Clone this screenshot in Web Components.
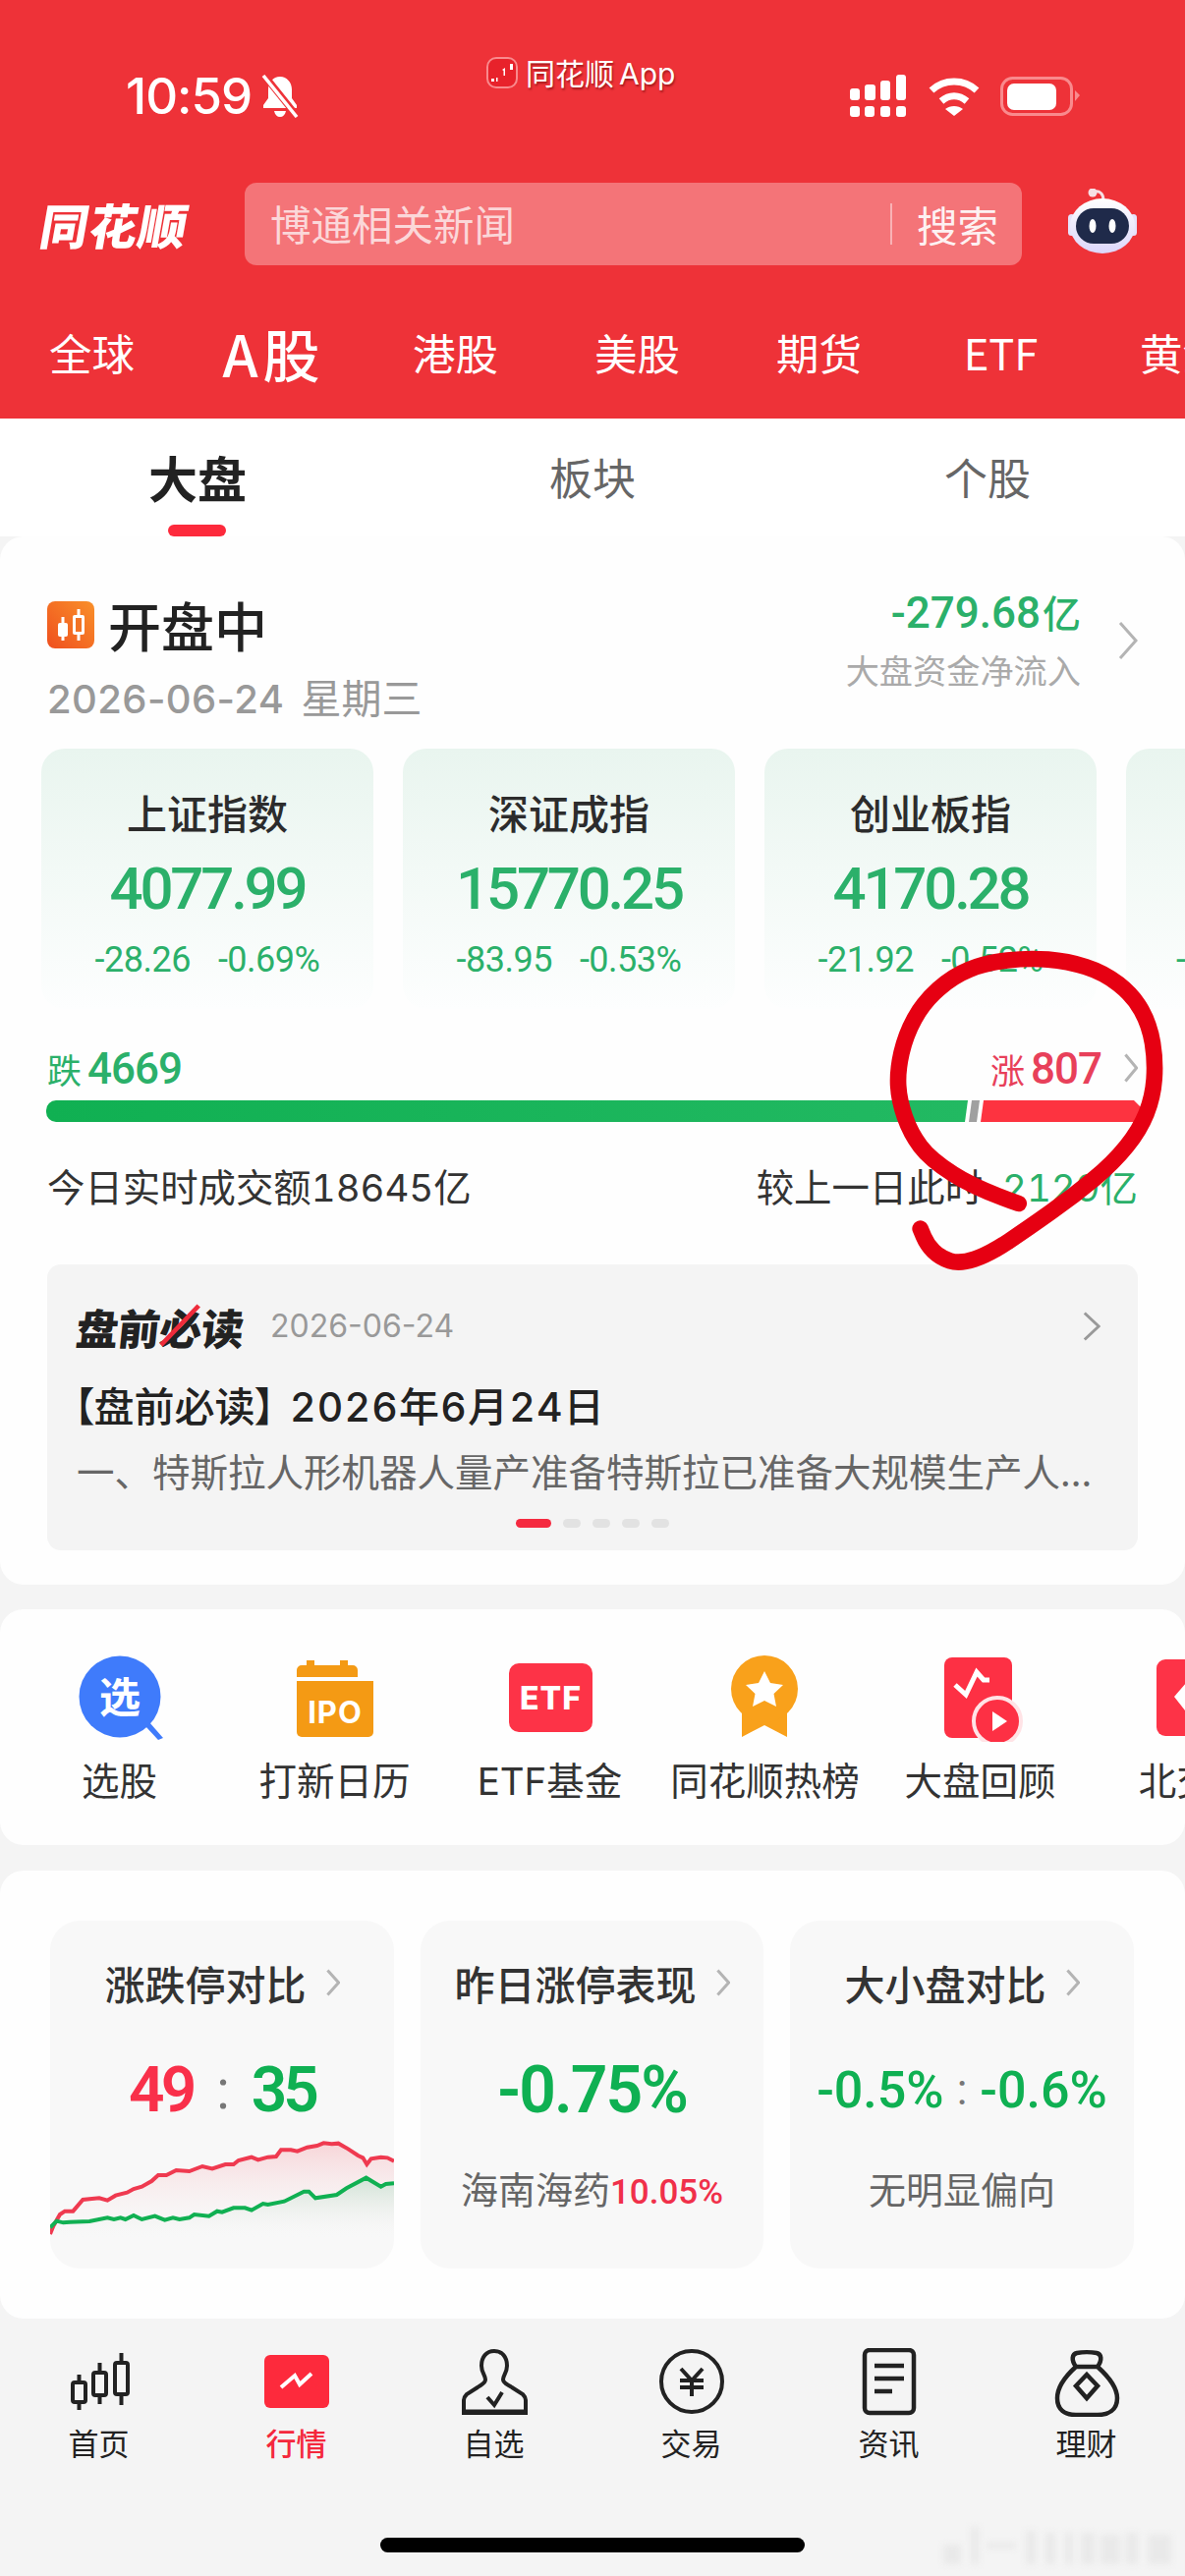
<!DOCTYPE html>
<html lang="zh">
<head>
<meta charset="utf-8">
<title>同花顺 行情</title>
<style>
  html, body { margin: 0; padding: 0; }
  body {
    position: relative;
    width: 1206px; height: 2622px; overflow: hidden;
    background: #f4f4f4;
    color: #222;
    font-family: "Noto Sans CJK SC", sans-serif;
  }
  .num { font-family: Roboto, "Noto Sans CJK SC", sans-serif; }
</style>
</head>
<body>

<app-header>
  <status-bar></status-bar>
  <search-row placeholder="博通相关新闻"></search-row>
  <market-tabs>
    <span>全球</span><b>A股</b><span>港股</span><span>美股</span><span>期货</span><span>ETF</span><span>黄金</span>
  </market-tabs>
</app-header>

<sub-tabs></sub-tabs>

<market-card>
  <index-tile>
    <span slot="title">上证指数</span><span slot="value">4077.99</span>
    <span slot="change">-28.26</span><span slot="change">-0.69%</span>
  </index-tile>
  <index-tile>
    <span slot="title">深证成指</span><span slot="value">15770.25</span>
    <span slot="change">-83.95</span><span slot="change">-0.53%</span>
  </index-tile>
  <index-tile>
    <span slot="title">创业板指</span><span slot="value">4170.28</span>
    <span slot="change">-21.92</span><span slot="change">-0.52%</span>
  </index-tile>
  <index-tile>
    <span slot="change" style="display:block;box-sizing:border-box;width:338px;padding-left:51px">-</span>
  </index-tile>
  <news-box slot="news"></news-box>
</market-card>

<shortcut-row>
  <shortcut-item label="选股">
    <svg viewBox="0 0 100 90" width="100" height="90">
      <path d="M80 70l14 16-5 2-13-14z" fill="#3f7bfb"/>
      <circle cx="50" cy="44" r="41.5" fill="#3f7bfb"/>
      <text x="50" y="60" text-anchor="middle" font-size="42" font-weight="700" fill="#fff" font-family="Noto Sans CJK SC">选</text>
    </svg>
  </shortcut-item>
  <shortcut-item label="打新日历">
    <svg viewBox="0 0 100 90" width="100" height="90">
      <path d="M11 24v-7a5 5 0 0 1 5-5h5V7h8v5h26V7h8v5h5a5 5 0 0 1 5 5v7z" fill="#f49a14"/>
      <path d="M11 28h78v52a5 5 0 0 1-5 5H16a5 5 0 0 1-5-5z" fill="#f49a14"/>
      <text x="50" y="71" text-anchor="middle" font-size="31" font-weight="700" fill="#fff" font-family="Inter" letter-spacing="1">IPO</text>
    </svg>
  </shortcut-item>
  <shortcut-item label="ETF基金">
    <svg viewBox="0 0 100 90" width="100" height="90">
      <rect x="8" y="10" width="85" height="70" rx="10" fill="#fd3347"/>
      <text x="50.500" y="57" text-anchor="middle" font-size="32" font-weight="800" fill="#fff" font-family="Inter" letter-spacing="1">ETF</text>
    </svg>
  </shortcut-item>
  <shortcut-item label="同花顺热榜">
    <svg viewBox="0 0 100 90" width="100" height="90">
      <path d="M26 50h46v35L49 73 26 85z" fill="#f9a11b"/>
      <ellipse cx="49" cy="36" rx="34" ry="34" fill="#f9a11b"/>
      <path d="M49 18l6 12 13 2-9.500 9 2.500 13-12-6-12 6 2.500-13-9.500-9 13-2z" fill="#fff"/>
    </svg>
  </shortcut-item>
  <shortcut-item label="大盘回顾">
    <svg viewBox="0 0 100 90" width="100" height="90">
      <rect x="13" y="4" width="69" height="82" rx="8" fill="#fd3044"/>
      <path d="M24 32l11 10 11-23 7 8h6" fill="none" stroke="#fff" stroke-width="5"/>
      <circle cx="67" cy="69" r="24" fill="#fd3044" stroke="#ffe3e6" stroke-width="4"/>
      <path d="M62 59l15 10-15 10z" fill="#fff"/>
    </svg>
  </shortcut-item>
  <shortcut-item label="北交所">
    <svg viewBox="0 0 100 90" width="100" height="90">
      <rect x="10" y="6" width="84" height="78" rx="9" fill="#fd3347"/>
      <path d="M28 44L40 30h25l10 14-25 28z" fill="#fff"/>
    </svg>
  </shortcut-item>
</shortcut-row>

<stats-card>
  <stat-tile title="涨跌停对比" chart>
    <span slot="value" class="num" style="font-size:64px;font-weight:600;letter-spacing:-4px;color:#f9304a">49</span>
    <span slot="value" class="num" style="font-size:56px;color:#777;margin:0 22px 0 24px">:</span>
    <span slot="value" class="num" style="font-size:64px;font-weight:600;letter-spacing:-4px;color:#0fb052">35</span>
    <trend-chart slot="chart"></trend-chart>
  </stat-tile>
  <stat-tile title="昨日涨停表现">
    <span slot="value" class="num" style="font-size:66px;font-weight:600;letter-spacing:-2px;color:#0fb052">-0.75%</span>
    <span slot="sub">海南海药<span class="num" style="font-size:35px;font-weight:500;color:#f0304a">10.05%</span></span>
  </stat-tile>
  <stat-tile title="大小盘对比">
    <span slot="value" class="num" style="font-size:52px;font-weight:500;color:#0fb052">-0.5%</span>
    <span slot="value" class="num" style="font-size:44px;color:#777;margin:0 13px">:</span>
    <span slot="value" class="num" style="font-size:52px;font-weight:500;color:#0fb052">-0.6%</span>
    <span slot="sub">无明显偏向</span>
  </stat-tile>
</stats-card>

<bottom-nav>
  <nav-item label="首页">
    <svg viewBox="0 0 70 70" width="70" height="70" fill="none" stroke="#222" stroke-width="4">
      <rect x="8" y="35" width="13" height="20" rx="2"/><path d="M14.500 27v8M14.500 55v8"/>
      <rect x="29" y="25" width="13" height="23" rx="2"/><path d="M35.500 15v10M35.500 48v9"/>
      <rect x="51" y="15" width="13" height="32" rx="2"/><path d="M57.500 5v10M57.500 47v11"/>
    </svg>
  </nav-item>
  <nav-item label="行情" active>
    <svg viewBox="0 0 70 70" width="70" height="70">
      <rect x="2" y="7" width="66" height="54" rx="6" fill="#fd2a3c"/>
      <path d="M19 40l14-12 5 9 12-11" fill="none" stroke="#fff" stroke-width="4"/>
    </svg>
  </nav-item>
  <nav-item label="自选">
    <svg viewBox="0 0 72 70" width="72" height="70" fill="none" stroke="#222" stroke-width="4">
      <path d="M36 3C44 3 49 9 49 18C49 25 45 28 45 32C45 36 50 37 54 40L65 47C67 49 68 50 68 53V66H5V53C5 50 6 49 8 47L19 40C23 37 27 36 27 32C27 28 23 25 23 18C23 9 28 3 36 3Z"/>
      <path d="M5 65h63" stroke-width="5"/>
      <path d="M29 50l7 8 8-13"/>
    </svg>
  </nav-item>
  <nav-item label="交易">
    <svg viewBox="0 0 70 70" width="70" height="70" fill="none" stroke="#222" stroke-width="4">
      <circle cx="35" cy="34" r="31"/>
      <path d="M24 21l11 12 11-12M23 33h24M23 40h24M35 33v16"/>
    </svg>
  </nav-item>
  <nav-item label="资讯">
    <svg viewBox="0 0 70 70" width="70" height="70" fill="none" stroke="#222" stroke-width="4.500">
      <rect x="10" y="2" width="50" height="64" rx="5"/>
      <path d="M20 18h30M20 31h30M20 44h18"/>
    </svg>
  </nav-item>
  <nav-item label="理财">
    <svg viewBox="0 0 70 70" width="70" height="70" fill="none" stroke="#222" stroke-width="4.500">
      <path d="M24 19C19 12 20 6 25 5c5-1 15-1 20 0 5 1 6 7 1 14"/>
      <path d="M24 19h22c10 9 20 20 20 32 0 12-9 17-20 17H24C13 68 5 63 5 51c0-12 9-23 19-32z"/>
      <path d="M35 27l11 11.500L35 51 24 38.500z"/>
    </svg>
  </nav-item>
</bottom-nav>

<ink-circle></ink-circle>

<script>
// wspolny szablon: kazdy element klonuje swoj template do open shadow root
function makeTemplate(html) {
  const t = document.createElement("template");
  t.innerHTML = html;
  return t;
}

class Base extends HTMLElement {
  constructor() {
    super();
    this.attachShadow({mode: "open"});
    this.shadowRoot.append(this.constructor.template.content.cloneNode(true));
  }
}

class AppHeader extends Base {}
AppHeader.template = makeTemplate(`
<style>
:host { display: block; height: 426px; background: #ee3238; color: #fff; overflow: hidden; }
</style>
<slot></slot>`);

class StatusBar extends Base {}
StatusBar.template = makeTemplate(`
<style>
:host { display: flex; height: 186px; box-sizing: border-box; padding: 0 0 0 128px; position: relative; }
.time { margin-top: 68px; height: 60px; font: 500 51px/60px Inter, sans-serif; letter-spacing: -1px; }
.bell { margin: 76px 0 0 8px; }
.app { display: flex; align-items: center; gap: 8px; position: absolute; left: 495px; top: 51px;
  font: 400 30px/44px "Noto Sans CJK SC", sans-serif; text-shadow: 1px 2px 2px rgba(90,0,0,.5); }
.app svg { display: block; }
.app em { font: 400 30px/44px Inter, sans-serif; margin-left: 5px; font-style: normal; }
.right { position: absolute; left: 864px; top: 76px; display: flex; gap: 21px; }
</style>
<div class="time">10:59</div>
<svg class="bell" width="42" height="44" viewBox="0 0 42 44">
  <path d="M21 2c-7 0-12 6-12 13v9l-5 7v3h34v-3l-5-7v-9c0-7-5-13-12-13z" fill="#fff"/>
  <path d="M15 37c1 4 3 6 6 6s5-2 6-6z" fill="#fff"/>
  <path d="M6 2l32 40" stroke="#ee3238" stroke-width="7"/>
  <path d="M4 1l34 42" stroke="#fff" stroke-width="3.500"/>
</svg>
<div class="app">
  <svg width="32" height="32" viewBox="0 0 32 32">
    <rect x="1" y="1" width="30" height="30" rx="9" fill="#e8222b" stroke="#f98a8d" stroke-width="2"/>
    <path d="M5 22h3v3H5zM10 21h1.500v4H10zM16 13l3-2v8h-1.500v-5zM24 7h3v6h-3z" fill="#fff"/>
  </svg>
  <span>同花顺<em>App</em></span>
</div>
<div class="right">
  <svg width="60" height="44" viewBox="0 0 60 44" fill="#fff">
    <rect x="1" y="14" width="10" height="12" rx="3"/><rect x="16" y="10" width="11" height="16" rx="3"/>
    <rect x="32" y="6" width="10" height="20" rx="3"/><rect x="48" y="0" width="10" height="26" rx="3"/>
    <rect x="1" y="32" width="10" height="11" rx="3"/><rect x="16" y="32" width="10" height="11" rx="3"/>
    <rect x="32" y="32" width="10" height="11" rx="3"/><rect x="48" y="32" width="10" height="11" rx="3"/>
  </svg>
  <svg width="52" height="44" viewBox="0 0 52 44" fill="none" stroke="#fff" stroke-width="7">
    <path d="M3 16c13-12 33-12 46 0"/><path d="M13 27c8-7 18-7 26 0"/>
    <path d="M26 42l-9-7c5-4 13-4 18 0z" fill="#fff" stroke="none"/>
  </svg>
  <svg width="84" height="44" viewBox="0 0 84 44">
    <rect x="1.500" y="3.500" width="71" height="37" rx="11" fill="none" stroke="#f98a8d" stroke-width="3"/>
    <rect x="7" y="9" width="50" height="27" rx="7" fill="#fff"/>
    <path d="M76 16l5 5-5 6z" fill="#f98a8d"/>
  </svg>
</div>`);

class SearchRow extends Base {
  connectedCallback() {
    this.shadowRoot.querySelector(".hint").textContent = this.getAttribute("placeholder");
  }
}
SearchRow.template = makeTemplate(`
<style>
:host { display: flex; align-items: center; height: 84px; padding-left: 42px; }
.logo { width: 207px; font: 900 49px/84px "Noto Sans CJK SC", sans-serif; letter-spacing: 1px;
  transform: skewX(-10deg); transform-origin: left center; white-space: nowrap; }
.box { display: flex; align-items: center; width: 791px; height: 84px; box-sizing: border-box; padding: 0 24px 0 26px;
  background: #f47478; border-radius: 12px; font-size: 41.500px; line-height: 80px; }
.hint { flex: 1; color: rgba(255,255,255,.72); margin-top: -3px; }
.btn { padding-left: 25px; border-left: 2px solid rgba(255,255,255,.45); height: 42px; display: flex; align-items: center; color: rgba(255,255,255,.92); }
svg { margin-left: 44px; }
</style>
<div class="logo">同花顺</div>
<div class="box"><span class="hint"></span><span class="btn">搜索</span></div>
<svg width="76" height="72" viewBox="0 0 76 72">
  <defs><linearGradient id="shell" x1="0" y1="0" x2="0" y2="1"><stop offset="0" stop-color="#fff"/><stop offset="1" stop-color="#dcd6fb"/></linearGradient></defs>
  <path d="M30 3c5-1 9 2 9 9" fill="none" stroke="#f6dfe4" stroke-width="3"/>
  <circle cx="28" cy="4" r="4.500" fill="#f6dfe4"/>
  <rect x="3" y="26" width="7" height="22" rx="3.500" fill="#e6e2fb"/><rect x="66" y="26" width="7" height="22" rx="3.500" fill="#e6e2fb"/>
  <ellipse cx="38" cy="38" rx="33" ry="28" fill="url(#shell)"/>
  <rect x="11" y="20" width="54" height="36" rx="18" fill="#1f2a4a"/>
  <ellipse cx="28" cy="38" rx="3.500" ry="7" fill="#fff"/><ellipse cx="48" cy="38" rx="3.500" ry="7" fill="#fff"/>
</svg>`);

class MarketTabs extends Base {}
MarketTabs.template = makeTemplate(`
<style>
:host { display: grid; grid-auto-flow: column; grid-auto-columns: 185px; align-items: center; justify-items: center;
  margin-left: 1px; height: 156px; padding-top: 21px; box-sizing: border-box; font-size: 43.500px; white-space: nowrap; }
::slotted(b) { font-size: 58px; font-weight: 500; letter-spacing: 5px; }
::slotted(span) { font-weight: 400; }
</style>
<slot></slot>`);

class SubTabs extends Base {}
SubTabs.template = makeTemplate(`
<style>
:host { display: grid; grid-template-columns: repeat(3, 1fr); height: 120px; background: #fff; text-align: center; }
div { font-size: 44px; line-height: 119px; color: #666; }
.on { font-size: 50px; font-weight: 700; color: #222; position: relative; }
.on::after { content: ""; position: absolute; left: 171px; top: 108px; width: 59px; height: 12px; border-radius: 6px; background: #fd2a3c; }
</style>
<div class="on">大盘</div><div>板块</div><div>个股</div>`);

class MarketCard extends Base {}
MarketCard.template = makeTemplate(`
<style>
:host { display: block; box-sizing: border-box; height: 1067px; background: #fefefe; border-radius: 24px; overflow: hidden; }
.head { display: flex; margin-top: 60px; padding: 0 48px; height: 132px; }
.left { flex: 1; }
.state { display: flex; align-items: center; gap: 14px; height: 60px; font-size: 54px; font-weight: 500; line-height: 58px; color: #222; }
.date { margin-top: 12px; font: 500 40px/60px Inter, "Noto Sans CJK SC", sans-serif; color: #999; letter-spacing: .4px; }
.date span { font: 400 41px/60px "Noto Sans CJK SC", sans-serif; margin-left: 17px; letter-spacing: 0; }
.flow { text-align: right; margin-top: -9px; }
.flow b { display: block; font: 500 44px/50px Roboto, "Noto Sans CJK SC", sans-serif; color: #2bb06a; }
.flow b i { font: 500 39px/50px "Noto Sans CJK SC", sans-serif; margin-left: 2px; }
.flow span { display: block; margin-top: 10px; font-size: 34.200px; line-height: 44px; color: #aaa; }
.head chev-mark { margin: 26px 0 0 38px; width: 20px; height: 40px; }
.tiles { display: flex; gap: 30px; margin-top: 24px; padding-left: 42px; height: 265px; overflow: hidden; }
.breadth { display: flex; align-items: center; margin-top: 35px; padding: 0 48px; height: 50px; }
.fall { flex: 1; color: #2bb06a; font-size: 35px; }
.rise { color: #e8405a; font-size: 35px; }
.fall b, .rise b { font: 500 44px/50px Roboto, sans-serif; margin-left: 6px; letter-spacing: -1px; }
.breadth chev-mark { margin-left: 23px; width: 14px; height: 30px; }
.bar { display: flex; height: 22px; margin: 8px 44px 0 47px; }
.bar i { display: block; height: 22px; }
.down { flex: 1; background: linear-gradient(90deg, #10b052, #22b962); border-radius: 10px 0 0 10px;
  clip-path: polygon(0 0, 100% 0, calc(100% - 3px) 100%, 0 100%); }
.flat { width: 11px; margin: 0 1px; background: #a0a0a0; clip-path: polygon(3px 0, 100% 0, 8px 100%, 0 100%); }
.up { width: 164px; background: #fd3340; clip-path: polygon(3px 0, calc(100% - 8px) 0, 100% 8px, 100% 100%, 0 100%); }
.volume { display: flex; justify-content: space-between; margin-top: 42px; padding: 0 48px; height: 50px;
  font: 400 38.400px/50px Inter, "Noto Sans CJK SC", sans-serif; font-variant-numeric: tabular-nums; color: #333; }
.volume em { font-style: normal; color: #2bb06a; margin-left: 20px; }
::slotted([slot=news]) { margin: 53px 48px 0; }
</style>
<div class="head">
  <div class="left">
    <div class="state">
      <svg width="48" height="48" viewBox="0 0 48 48">
        <defs><linearGradient id="ic" x1="1" y1="0" x2="0" y2="1"><stop offset="0" stop-color="#f9902a"/><stop offset="1" stop-color="#ef4f1e"/></linearGradient></defs>
        <rect width="48" height="48" rx="8" fill="url(#ic)"/>
        <path d="M32 8v32" stroke="#fff" stroke-width="3"/><rect x="26" y="14" width="12" height="20" rx="2" fill="#fff"/><rect x="29" y="17" width="6" height="14" fill="#f27326"/>
        <path d="M16 16v24" stroke="#fff" stroke-width="3"/><rect x="11" y="22" width="10" height="14" rx="2" fill="#fff"/>
      </svg>
      开盘中
    </div>
    <div class="date">2026-06-24<span>星期三</span></div>
  </div>
  <div class="flow"><b>-279.68<i>亿</i></b><span>大盘资金净流入</span></div>
  <chev-mark></chev-mark>
</div>
<div class="tiles"><slot></slot></div>
<div class="breadth">
  <span class="fall">跌<b>4669</b></span>
  <span class="rise">涨<b>807</b></span>
  <chev-mark></chev-mark>
</div>
<div class="bar"><i class="down"></i><i class="flat"></i><i class="up"></i></div>
<div class="volume">
  <span>今日实时成交额18645亿</span>
  <span>较上一日此时<em>2129亿</em></span>
</div>
<slot name="news"></slot>`);

class ChevMark extends Base {}
ChevMark.template = makeTemplate(`
<style>
:host { display: block; flex: none; }
svg { display: block; width: 100%; height: 100%; }
</style>
<svg viewBox="0 0 20 40" preserveAspectRatio="none">
  <path d="M2 2L18 20 2 38" fill="none" stroke="var(--chev, #b4b4b4)" stroke-width="3" vector-effect="non-scaling-stroke"/>
</svg>`);

class IndexTile extends Base {}
IndexTile.template = makeTemplate(`
<style>
:host { display: block; flex: none; width: 338px; height: 265px; border-radius: 24px; text-align: center;
  background: linear-gradient(180deg, #e9f5ef 0%, #fdfefe 100%); }
.title { padding-top: 40px; height: 48px; font-size: 41px; line-height: 48px; font-weight: 500; color: #2c2c2c; }
.value { margin-top: 23px; height: 64px; font: 500 60px/64px Roboto, sans-serif; letter-spacing: -3.200px; color: #2bb06a; }
.change { display: flex; justify-content: center; gap: 28px; margin-top: 20px; height: 40px;
  font: 400 36px/40px Roboto, sans-serif; letter-spacing: -.5px; color: #2bb06a; text-align: left; }
</style>
<div class="title"><slot name="title"></slot></div>
<div class="value"><slot name="value"></slot></div>
<div class="change"><slot name="change"></slot></div>`);

class NewsBox extends Base {}
NewsBox.template = makeTemplate(`
<style>
:host { display: block; height: 291px; box-sizing: border-box; padding: 39px 38px 0 30px; background: #f4f4f4; border-radius: 14px; }
.top { display: flex; align-items: center; height: 48px; }
.brand { position: relative; font-size: 43px; font-weight: 900; line-height: 48px; color: #222; transform: skewX(-6deg); letter-spacing: -.5px; }
.brand svg { position: absolute; left: 84px; top: 0; }
.date { flex: 1; margin-left: 27px; font: 400 32px/48px Inter, sans-serif; color: #999; }
chev-mark { width: 18px; height: 30px; --chev: #999; }
.headline { margin: 30px 0 0 -3px; height: 56px; font: 500 41px/56px Inter, "Noto Sans CJK SC", sans-serif; font-feature-settings: "palt"; color: #222; white-space: nowrap; }
.headline span { margin-left: 15px; font-feature-settings: "tnum"; letter-spacing: 1.200px; }
.body { margin-top: 11px; height: 50px; font-size: 38.500px; line-height: 50px; color: #666; white-space: nowrap; }
.dots { display: flex; justify-content: center; gap: 12px; margin-top: 25px; margin-left: 8px; }
.dots i { display: block; width: 18px; height: 9px; border-radius: 5px; background: #e2e2e2; }
.dots i:first-child { width: 36px; background: #f52a40; }
</style>
<div class="top">
  <span class="brand">盘前必读<svg width="44" height="48" viewBox="0 0 44 48"><path d="M38 3L4 43" stroke="#ee2b3b" stroke-width="5"/></svg></span>
  <span class="date">2026-06-24</span>
  <chev-mark></chev-mark>
</div>
<div class="headline">【盘前必读】<span>2026年6月24日</span></div>
<div class="body">一、特斯拉人形机器人量产准备特斯拉已准备大规模生产人...</div>
<div class="dots"><i></i><i></i><i></i><i></i><i></i></div>`);

class ShortcutRow extends Base {}
ShortcutRow.template = makeTemplate(`
<style>
:host { display: flex; box-sizing: border-box; height: 240px; margin-top: 25px; padding: 45px 0 0 12px;
  background: #fefefe; border-radius: 24px; overflow: hidden; }
</style>
<slot></slot>`);

class ShortcutItem extends Base {
  connectedCallback() {
    this.shadowRoot.querySelector(".label").textContent = this.getAttribute("label");
  }
}
ShortcutItem.template = makeTemplate(`
<style>
:host { display: flex; flex: none; flex-direction: column; align-items: center; width: 219px; }
.icon { height: 90px; }
.label { margin-top: 15px; font: 400 38.500px/50px Inter, "Noto Sans CJK SC", sans-serif; color: #333; white-space: nowrap; }
</style>
<div class="icon"><slot></slot></div>
<div class="label"></div>`);

class StatsCard extends Base {}
StatsCard.template = makeTemplate(`
<style>
:host { display: grid; grid-template-columns: 350px 349px 350px; gap: 27px; box-sizing: border-box; height: 456px; margin-top: 26px;
  padding: 51px 52px 0 51px; background: #fefefe; border-radius: 24px; }
</style>
<slot></slot>`);

class StatTile extends Base {
  connectedCallback() {
    this.shadowRoot.querySelector(".name").textContent = this.getAttribute("title");
  }
}
StatTile.template = makeTemplate(`
<style>
:host { display: flex; flex-direction: column; height: 354px; background: #f8f8f8; border-radius: 30px; overflow: hidden; text-align: center; }
.title { display: flex; justify-content: center; align-items: center; gap: 20px; margin-top: 38px; height: 50px; font-size: 41px; font-weight: 500; color: #333; }
.title chev-mark { width: 14px; height: 28px; }
.value { display: flex; justify-content: center; align-items: center; margin-top: 44px; height: 80px; white-space: nowrap; }
.sub { margin-top: 35px; font-size: 38px; line-height: 50px; color: #666; white-space: nowrap; }
:host([chart]) .sub { display: none; }
.chart { margin-top: auto; }
</style>
<div class="title"><span class="name"></span><chev-mark></chev-mark></div>
<div class="value"><slot name="value"></slot></div>
<div class="sub"><slot name="sub"></slot></div>
<div class="chart"><slot name="chart"></slot></div>`);

// wykres z punktow odczytanych z powiekszenia
const RED_LINE = "65,465 75,440 95,405 110,395 135,395 165,360 185,358 215,355 240,362 265,347 300,338 320,327 345,320 375,303 395,285 420,285 450,270 490,273 530,258 560,265 600,252 625,252 640,240 680,230 700,238 730,230 755,228 770,208 800,208 820,212 850,200 880,195 900,187 925,190 945,188 975,205 1005,225 1020,232 1032,252 1045,235 1075,230 1095,232 1115,242";
const GREEN_LINE = "65,445 85,425 105,430 125,428 185,426 240,415 260,420 280,415 295,420 320,408 345,420 385,410 415,422 440,415 460,420 490,415 505,405 550,410 575,395 590,398 625,385 660,385 680,392 715,372 730,375 780,365 840,335 855,335 875,355 940,345 970,325 1030,293 1075,320 1090,312 1115,310";

class TrendChart extends Base {
  connectedCallback() {
    const root = this.shadowRoot;
    root.querySelector(".red").setAttribute("points", RED_LINE);
    root.querySelector(".green").setAttribute("points", GREEN_LINE);
    root.querySelector(".red-area").setAttribute("points", RED_LINE + " 1115,480 65,480");
    root.querySelector(".green-area").setAttribute("points", GREEN_LINE + " 1115,480 65,480");
  }
}
TrendChart.template = makeTemplate(`
<style>
:host { display: block; width: 350px; height: 140px; }
svg { display: block; }
</style>
<svg width="350" height="140" viewBox="65 150 1050 420">
  <defs>
    <linearGradient id="rf" x1="0" y1="0" x2="0" y2="1"><stop offset="0" stop-color="#f7c9cd" stop-opacity=".75"/><stop offset="1" stop-color="#f8f8f8" stop-opacity="0"/></linearGradient>
    <linearGradient id="gf" x1="0" y1="0" x2="0" y2="1"><stop offset="0" stop-color="#cfe3d6"/><stop offset="1" stop-color="#f8f8f8" stop-opacity="0"/></linearGradient>
  </defs>
  <polygon class="red-area" fill="url(#rf)"/>
  <polygon class="green-area" fill="url(#gf)"/>
  <polyline class="red" fill="none" stroke="#ef3a50" stroke-width="12"/>
  <polyline class="green" fill="none" stroke="#10b052" stroke-width="12"/>
</svg>`);

class BottomNav extends Base {}
BottomNav.template = makeTemplate(`
<style>
:host { display: block; position: relative; height: 262px; }
.items { display: grid; grid-template-columns: repeat(6, 201px); padding-top: 30px; height: 117px; }
.home { width: 432px; height: 15px; margin: 76px 0 0 387px; border-radius: 8px; background: #000; }
.mark { position: absolute; left: 960px; top: 210px; filter: blur(3px); }
</style>
<div class="items"><slot></slot></div>
<div class="home"></div>
<svg class="mark" width="236" height="42" viewBox="0 0 236 42" fill="#e9e9e9">
  <rect x="0" y="20" width="18" height="20"/><rect x="28" y="2" width="8" height="38"/><rect x="44" y="18" width="30" height="6"/>
  <rect x="84" y="6" width="10" height="34"/><rect x="104" y="8" width="10" height="32"/><rect x="124" y="8" width="8" height="32"/>
  <rect x="140" y="8" width="14" height="32"/><rect x="160" y="10" width="20" height="30"/><rect x="186" y="8" width="12" height="32"/><rect x="208" y="10" width="24" height="30"/>
</svg>`);

class NavItem extends Base {
  connectedCallback() {
    this.shadowRoot.querySelector(".label").textContent = this.getAttribute("label");
  }
}
NavItem.template = makeTemplate(`
<style>
:host { display: flex; flex-direction: column; align-items: center; }
.icon { height: 70px; }
.label { margin-top: 6px; font-size: 31px; line-height: 40px; color: #222; }
:host([active]) .label { color: #f4283c; font-weight: 500; }
</style>
<div class="icon"><slot></slot></div>
<div class="label"></div>`);

// czerwone kolko narysowane palcem na zrzucie, punkty w skali 3x
const INK = [[530,855],[400,810],[260,720],[200,640],[165,540],[160,450],[185,340],[240,240],[330,160],[430,120],[560,105],[680,115],[790,150],[880,220],[930,310],[948,420],[940,530],[900,630],[820,730],[700,830],[560,930],[440,1010],[350,1040],[290,1020],[250,980],[230,932]];

class InkCircle extends Base {
  connectedCallback() {
    let d = `M${INK[0]}`;
    for (let i = 1; i < INK.length - 1; i++) {
      const mx = (INK[i][0] + INK[i + 1][0]) / 2, my = (INK[i][1] + INK[i + 1][1]) / 2;
      d += ` Q${INK[i]} ${mx},${my}`;
    }
    d += ` L${INK[INK.length - 1]}`;
    this.shadowRoot.querySelector("path").setAttribute("d", d);
  }
}
InkCircle.template = makeTemplate(`
<style>
:host { display: block; position: absolute; left: 860px; top: 940px; width: 346px; height: 380px; pointer-events: none; }
svg { display: block; }
</style>
<svg width="346" height="380" viewBox="0 0 1038 1140">
  <path fill="none" stroke="#e60012" stroke-width="50" stroke-linecap="round" stroke-linejoin="round"/>
</svg>`);

customElements.define("app-header", AppHeader);
customElements.define("status-bar", StatusBar);
customElements.define("search-row", SearchRow);
customElements.define("market-tabs", MarketTabs);
customElements.define("sub-tabs", SubTabs);
customElements.define("chev-mark", ChevMark);
customElements.define("market-card", MarketCard);
customElements.define("index-tile", IndexTile);
customElements.define("news-box", NewsBox);
customElements.define("shortcut-row", ShortcutRow);
customElements.define("shortcut-item", ShortcutItem);
customElements.define("stats-card", StatsCard);
customElements.define("stat-tile", StatTile);
customElements.define("trend-chart", TrendChart);
customElements.define("bottom-nav", BottomNav);
customElements.define("nav-item", NavItem);
customElements.define("ink-circle", InkCircle);
</script>
</body>
</html>
